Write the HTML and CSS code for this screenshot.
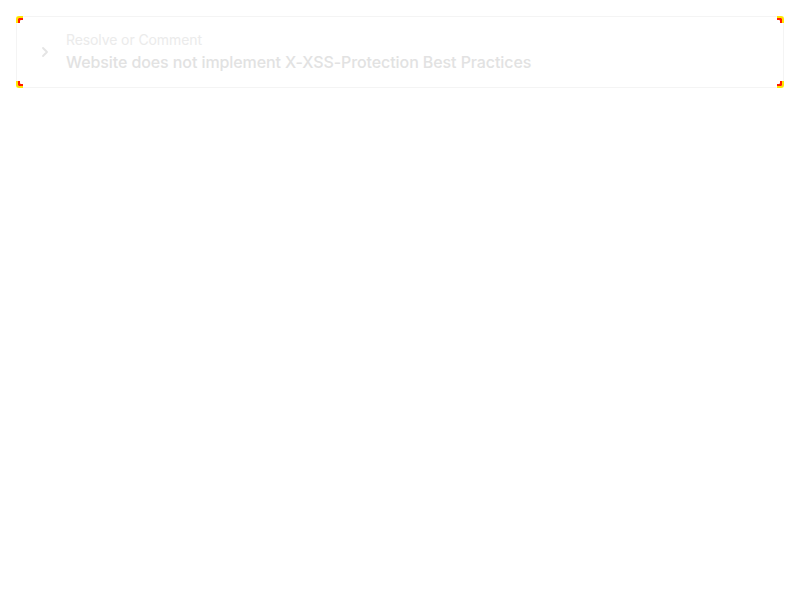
FILE: index.html
```html
<!DOCTYPE html>
<html>
<head>
<meta charset="utf-8">
<link rel="stylesheet" href="styles.css">
</head>
<body>
<div class="card">
  <span class="corner tl"></span>
  <span class="corner tr"></span>
  <span class="corner bl"></span>
  <span class="corner br"></span>
  <div class="chev">
    <svg width="8" height="12" viewBox="0 0 8 12"><path d="M2 2 L6 6 L2 10" fill="none" stroke="#e4e4e4" stroke-width="1.8" stroke-linecap="round" stroke-linejoin="round"/></svg>
  </div>
  <div class="text">
    <div class="label">Resolve or Comment</div>
    <div class="title">Website does not implement X-XSS-Protection Best Practices</div>
  </div>
</div>
</body>
</html>
```
FILE: styles.css
```css
html, body { margin: 0; padding: 0; background: #fff; }
body { padding: 16px; font-family: Inter, "Noto Sans", sans-serif; }
.card {
  position: relative;
  background: #fff;
  border: 1px solid #f4f4f4;
  border-radius: 6px;
  height: 70px;
  display: flex;
  align-items: center;
}
.corner {
  position: absolute;
  width: 5px;
  height: 5px;
  border: 0 solid #ffe600;
}
.corner.tl { top: -1px; left: -1px; border-top-width: 2px; border-left-width: 2px; box-shadow: inset 2px 2px 0 #ff1a00; border-top-left-radius: 3px; }
.corner.tr { top: -1px; right: -1px; border-top-width: 2px; border-right-width: 2px; box-shadow: inset -2px 2px 0 #ff1a00; border-top-right-radius: 3px; }
.corner.bl { bottom: -1px; left: -1px; border-bottom-width: 2px; border-left-width: 2px; box-shadow: inset 2px -2px 0 #ff1a00; border-bottom-left-radius: 3px; }
.corner.br { bottom: -1px; right: -1px; border-bottom-width: 2px; border-right-width: 2px; box-shadow: inset -2px -2px 0 #ff1a00; border-bottom-right-radius: 3px; }
.chev { width: 8px; margin-left: 24px; margin-right: 17px; display: flex; justify-content: center; }
.text { display: flex; flex-direction: column; }
.label { font-size: 14px; line-height: 20px; color: #ebebeb; letter-spacing: -0.1px; }
.title { font-size: 16px; line-height: 24px; font-weight: 500; color: #e2e2e2; letter-spacing: -0.09px; }
```
